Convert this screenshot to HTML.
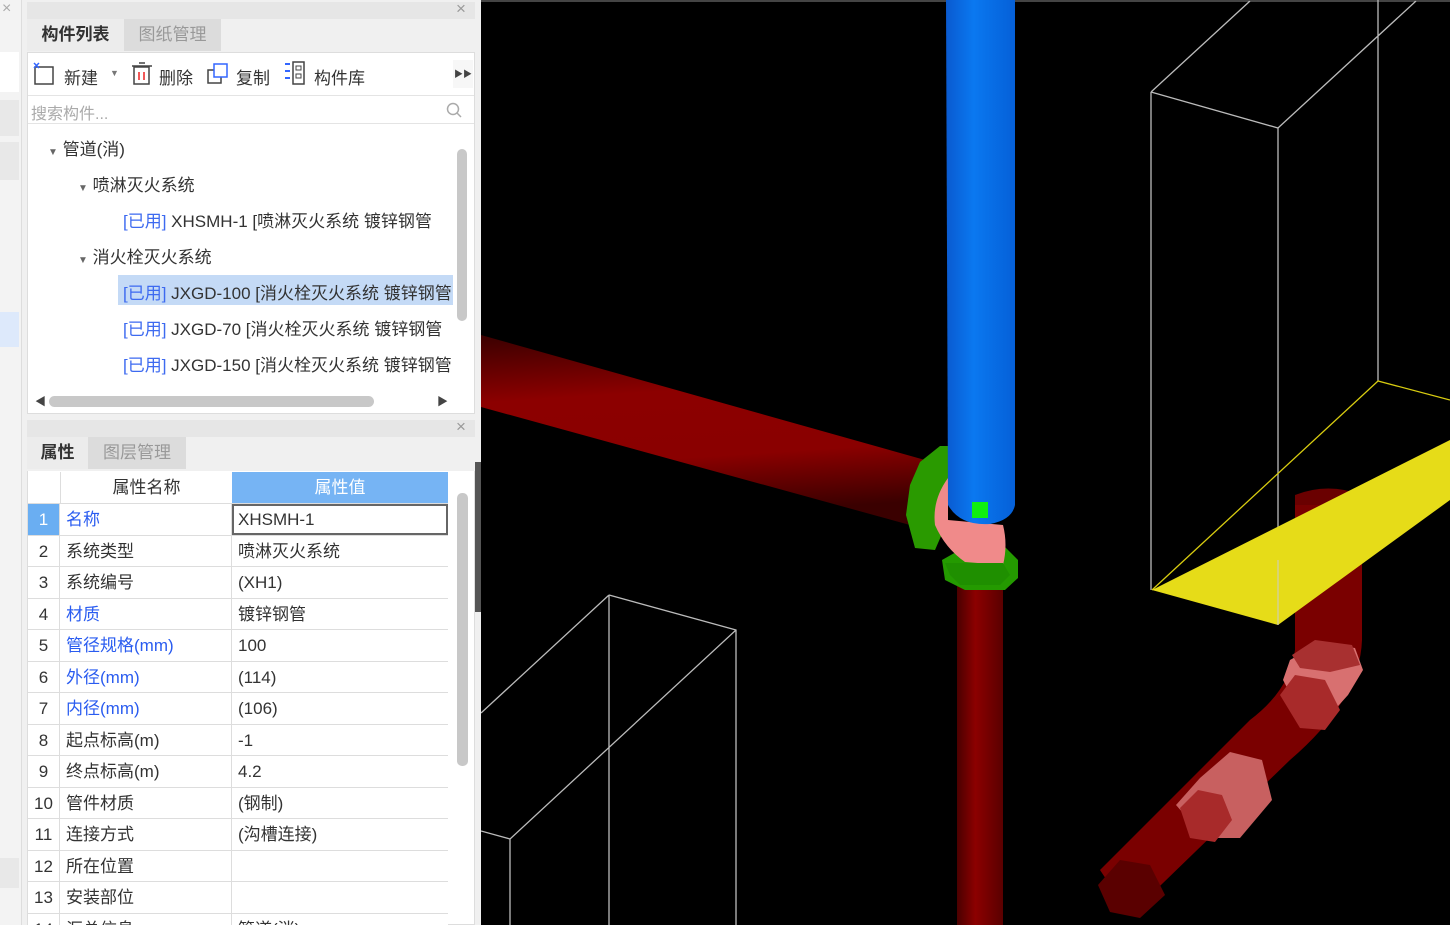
<!DOCTYPE html>
<html style="width:1450px;height:925px;overflow:hidden"><head><meta charset="utf-8"><style>
*{margin:0;padding:0;box-sizing:border-box}
body{width:1450px;height:925px;overflow:hidden;background:#f0f0f0;font-family:"Liberation Sans","Noto Sans CJK SC",sans-serif;font-size:17px;color:#333;position:relative}
.abs{position:absolute}
.tab{position:absolute;top:0;height:32px;line-height:32px;text-align:center;font-size:17px}
.row{position:absolute;left:0;width:420px;height:31.5px;border-bottom:1px solid #ddd;background:#fff}
.row div{position:absolute;top:0;height:31px;line-height:31px}
.n{left:0;width:32px;text-align:center;border-right:1px solid #ddd}
.k{left:32px;width:172px;padding-left:6px;border-right:1px solid #ddd}
.v{left:204px;padding-left:6px}
.blue{color:#2a5cf0}
.tree{position:absolute;font-size:17px;white-space:nowrap}
.tree .b{color:#3d6af0}
</style></head><body>
<div class="abs" style="left:0;top:0;width:22px;height:925px;background:#f3f3f3;border-right:1px solid #ddd"></div>
<div class="abs" style="left:2px;top:0;font-size:16px;color:#aaa">×</div>
<div class="abs" style="left:0;top:52px;width:19px;height:40px;background:#fff"></div>
<div class="abs" style="left:0;top:100px;width:19px;height:36px;background:#e8e8e8"></div>
<div class="abs" style="left:0;top:142px;width:19px;height:38px;background:#e8e8e8"></div>
<div class="abs" style="left:0;top:312px;width:19px;height:35px;background:#dde9fb"></div>
<div class="abs" style="left:0;top:858px;width:19px;height:30px;background:#e8e8e8"></div>

<div class="abs" style="left:27px;top:2px;width:448px;height:412px;background:#fff;border:1px solid #ddd"></div>
<div class="abs" style="left:27px;top:2px;width:448px;height:17px;background:#e6e6e6"></div>
<div class="abs" style="left:456px;top:-1px;font-size:17px;color:#999">×</div>
<div class="abs" style="left:27px;top:19px;width:448px;height:34px;background:#f0f0f0;border-bottom:1px solid #ddd">
 <div class="tab" style="left:0;width:97px;background:#ececec;font-weight:bold;color:#333">构件列表</div>
 <div class="tab" style="left:97px;width:97px;background:#dcdcdc;color:#999">图纸管理</div>
</div>
<div class="abs" style="left:28px;top:56px;width:446px;height:37px;background:#fff;font-size:17px">
 <svg class="abs" style="left:5px;top:6px" width="24" height="24"><rect x="2" y="5" width="18" height="17" fill="none" stroke="#444" stroke-width="1.5"/><path d="M1 1l5 5M6 1l-5 5" stroke="#36f" stroke-width="1.5"/></svg>
 <span class="abs" style="left:36px;top:8px">新建</span><span class="abs" style="left:82px;top:12px;font-size:9px;color:#777">▼</span>
 <svg class="abs" style="left:103px;top:6px" width="22" height="24"><rect x="3" y="5" width="15" height="17" fill="none" stroke="#444" stroke-width="1.5"/><path d="M1 4h20M8 1h6" stroke="#444" stroke-width="1.5"/><path d="M8 10v8M13 10v8" stroke="#e22" stroke-width="1.5"/></svg>
 <span class="abs" style="left:131px;top:8px">删除</span>
 <svg class="abs" style="left:178px;top:6px" width="24" height="24"><rect x="2" y="8" width="13" height="13" fill="none" stroke="#444" stroke-width="1.5"/><rect x="8" y="2" width="13" height="13" fill="#fff" stroke="#36f" stroke-width="1.5"/></svg>
 <span class="abs" style="left:208px;top:8px">复制</span>
 <svg class="abs" style="left:256px;top:5px" width="24" height="26"><path d="M1 3h5M1 10h5M1 17h5" stroke="#36f" stroke-width="2"/><rect x="9" y="1" width="11" height="22" fill="none" stroke="#444" stroke-width="1.5"/><rect x="12" y="5" width="5" height="4" fill="none" stroke="#444"/><rect x="12" y="13" width="5" height="4" fill="none" stroke="#444"/></svg>
 <span class="abs" style="left:286px;top:8px">构件库</span>
 <div class="abs" style="left:425px;top:4px;width:20px;height:28px;background:#f7f7f7;font-size:9px;color:#444;line-height:28px;text-align:center">▶▶</div>
</div>
<div class="abs" style="left:28px;top:95px;width:446px;height:29px;background:#fff;border-top:1px solid #e4e4e4;border-bottom:1px solid #e4e4e4">
 <span class="abs" style="left:3px;top:4px;color:#aaa;font-size:16px">搜索构件...</span>
 <svg class="abs" style="left:418px;top:6px" width="16" height="16"><circle cx="7" cy="7" r="5.5" fill="none" stroke="#aaa" stroke-width="1.5"/><path d="M11 11l4 4" stroke="#aaa" stroke-width="1.5"/></svg>
</div>
<div class="abs" style="left:28px;top:125px;width:446px;height:288px;background:#fff;overflow:hidden">
 <div class="abs" style="left:90px;top:150px;width:335px;height:30px;background:#c4daf6"></div>
 <div class="tree" style="left:20px;top:10px"><span style="font-size:10px;color:#666">▼</span> 管道(消)</div>
 <div class="tree" style="left:50px;top:46px"><span style="font-size:10px;color:#666">▼</span> 喷淋灭火系统</div>
 <div class="tree" style="left:95px;top:82px;width:330px;overflow:hidden"><span class="b">[已用]</span> XHSMH-1 [喷淋灭火系统 镀锌钢管</div>
 <div class="tree" style="left:50px;top:118px"><span style="font-size:10px;color:#666">▼</span> 消火栓灭火系统</div>
 <div class="tree" style="left:95px;top:154px;width:330px;overflow:hidden"><span class="b">[已用]</span> JXGD-100 [消火栓灭火系统 镀锌钢管</div>
 <div class="tree" style="left:95px;top:190px;width:330px;overflow:hidden"><span class="b">[已用]</span> JXGD-70 [消火栓灭火系统 镀锌钢管</div>
 <div class="tree" style="left:95px;top:226px;width:330px;overflow:hidden"><span class="b">[已用]</span> JXGD-150 [消火栓灭火系统 镀锌钢管</div>
 <div class="tree" style="left:95px;top:262px;width:330px;overflow:hidden"><span class="b">[已用]</span> JXGD-80 [消火栓灭火系统 镀锌钢管</div>
 <div class="abs" style="left:429px;top:24px;width:10px;height:172px;background:#c8c8c8;border-radius:5px"></div>
 <div class="abs" style="left:0;top:266px;width:446px;height:22px;background:#fff"></div>
 <div class="abs" style="left:21px;top:271px;width:325px;height:11px;background:#c8c8c8;border-radius:6px"></div>
 <span class="abs" style="left:7px;top:268px;font-size:11px;color:#444">◀</span>
 <span class="abs" style="left:409px;top:268px;font-size:11px;color:#444">▶</span>
</div>

<div class="abs" style="left:27px;top:420px;width:448px;height:505px;background:#fff;border:1px solid #ddd"></div>
<div class="abs" style="left:27px;top:420px;width:448px;height:17px;background:#e6e6e6"></div>
<div class="abs" style="left:456px;top:417px;font-size:17px;color:#999">×</div>
<div class="abs" style="left:27px;top:437px;width:448px;height:34px;background:#f0f0f0">
 <div class="tab" style="left:0;width:61px;background:#ececec;font-weight:bold">属性</div>
 <div class="tab" style="left:61px;width:98px;background:#dcdcdc;color:#999">图层管理</div>
</div>
<div class="abs" style="left:28px;top:472px;width:420px;height:32px;background:#fff;border-bottom:1px solid #ddd">
 <div class="abs" style="left:32px;top:0;width:172px;height:31px;line-height:31px;text-align:center;border-left:1px solid #ddd">属性名称</div>
 <div class="abs" style="left:204px;top:0;width:216px;height:31px;line-height:31px;text-align:center;background:#76b4f4;color:#fff">属性值</div>
</div>
<div class="abs" style="left:28px;top:504px;width:420px;height:421px;overflow:hidden">
<div class="row" style="top:0"><div class="n" style="background:#6aaef2;color:#fff">1</div><div class="k blue">名称</div><div class="v" style="left:204px;width:216px;border:2px solid #666;height:31px;line-height:27px;padding-left:4px">XHSMH-1</div></div>
<div class="row" style="top:31.5px"><div class="n">2</div><div class="k">系统类型</div><div class="v">喷淋灭火系统</div></div>
<div class="row" style="top:63px"><div class="n">3</div><div class="k">系统编号</div><div class="v">(XH1)</div></div>
<div class="row" style="top:94.5px"><div class="n">4</div><div class="k blue">材质</div><div class="v">镀锌钢管</div></div>
<div class="row" style="top:126px"><div class="n">5</div><div class="k blue">管径规格(mm)</div><div class="v">100</div></div>
<div class="row" style="top:157.5px"><div class="n">6</div><div class="k blue">外径(mm)</div><div class="v">(114)</div></div>
<div class="row" style="top:189px"><div class="n">7</div><div class="k blue">内径(mm)</div><div class="v">(106)</div></div>
<div class="row" style="top:220.5px"><div class="n">8</div><div class="k">起点标高(m)</div><div class="v">-1</div></div>
<div class="row" style="top:252px"><div class="n">9</div><div class="k">终点标高(m)</div><div class="v">4.2</div></div>
<div class="row" style="top:283.5px"><div class="n">10</div><div class="k">管件材质</div><div class="v">(钢制)</div></div>
<div class="row" style="top:315px"><div class="n">11</div><div class="k">连接方式</div><div class="v">(沟槽连接)</div></div>
<div class="row" style="top:346.5px"><div class="n">12</div><div class="k">所在位置</div><div class="v"></div></div>
<div class="row" style="top:378px"><div class="n">13</div><div class="k">安装部位</div><div class="v"></div></div>
<div class="row" style="top:409.5px"><div class="n">14</div><div class="k">汇总信息</div><div class="v">管道(消)</div></div>
</div>
<div class="abs" style="left:457px;top:493px;width:11px;height:273px;background:#c8c8c8;border-radius:5px"></div>
<div class="abs" style="left:475px;top:462px;width:6px;height:150px;background:#555"></div>

<svg class="abs" style="left:481px;top:0" width="969" height="925" viewBox="481 0 969 925">
 <defs>
  <linearGradient id="rp" x1="0" y1="0" x2="0.15" y2="1"><stop offset="0" stop-color="#3a0000"/><stop offset="0.35" stop-color="#8c0000"/><stop offset="0.7" stop-color="#8a0000"/><stop offset="1" stop-color="#3a0000"/></linearGradient>
  <linearGradient id="rv" x1="0" y1="0" x2="1" y2="0"><stop offset="0" stop-color="#4a0000"/><stop offset="0.4" stop-color="#8c0000"/><stop offset="1" stop-color="#5a0000"/></linearGradient>
  <linearGradient id="bl" x1="0" y1="0" x2="1" y2="0"><stop offset="0" stop-color="#0a5ad0"/><stop offset="0.4" stop-color="#0a78f0"/><stop offset="1" stop-color="#0560d8"/></linearGradient>
 </defs>
 <rect x="481" y="0" width="969" height="925" fill="#000"/>
 <line x1="481" y1="1" x2="1450" y2="1" stroke="#888" stroke-width="1"/>
 <g stroke="#bbb" stroke-width="1.3" fill="none">
  <path d="M1151 92L1250 1M1151 92L1278 128L1416 1M1378 0V381M1151 92V590M1278 128V625"/>
  <path d="M609 595L481 713M609 595V925M609 595L736 630V925M736 630L510 839V925M481 831L510 839"/>
 </g>
 <path d="M1295 495 L1295 650 Q1290 690 1250 720 L1100 870 L1130 915 L1290 760 Q1360 700 1362 640 L1362 495 Z" fill="#7a0000"/>
 <path d="M1295 495 Q1328 482 1362 495 L1362 505 L1295 505Z" fill="#6a0000"/>
 <polygon points="1098,885 1120,860 1150,865 1165,895 1140,918 1110,912" fill="#5a0000"/>
 <polygon points="1176,805 1200,778 1230,752 1262,760 1272,800 1240,838 1205,838" fill="#c86060"/>
 <polygon points="1180,808 1198,790 1222,795 1232,820 1215,842 1190,838" fill="#a82a2a"/>
 <polygon points="1283,680 1290,660 1320,643 1355,648 1363,670 1348,695 1330,715 1300,712" fill="#d87070"/>
 <polygon points="1280,695 1295,675 1325,680 1340,710 1325,730 1300,728" fill="#a82a2a"/>
 <polygon points="1292,655 1315,640 1352,645 1360,665 1330,672 1300,668" fill="#a83030"/>
 <polygon points="1152,590 1450,440 1450,500 1278,625" fill="#e6dc18"/>
 <path d="M1152 590L1378 381L1450 400" stroke="#d8cc10" stroke-width="1.3" fill="none"/>
 <line x1="1278" y1="560" x2="1278" y2="625" stroke="#ccc" stroke-width="1"/>
 <polygon points="481,335 925,460 910,525 481,407" fill="url(#rp)"/>
 <rect x="957" y="580" width="46" height="345" fill="url(#rv)"/>
 <polygon points="920,462 940,446 948,446 948,520 935,550 915,548 906,515 910,485" fill="#2a9a00"/>
 <polygon points="942,560 965,547 1005,547 1018,560 1018,578 1005,590 965,590 945,580" fill="#249a00"/>
 <path d="M948 478 Q932 500 935 525 Q945 548 965 562 L1003 565 Q1008 545 1003 525 L948 520Z" fill="#f08a8a"/>
 <polygon points="945,563 1003,563 1010,575 1000,585 960,585 950,575" fill="#1f8f00"/>
 <path d="M946 0 H1015 V505 Q1012 520 990 524 Q960 526 948 505 Z" fill="url(#bl)"/>
 <rect x="972" y="502" width="16" height="16" fill="#10f010"/>
</svg>
</body></html>
